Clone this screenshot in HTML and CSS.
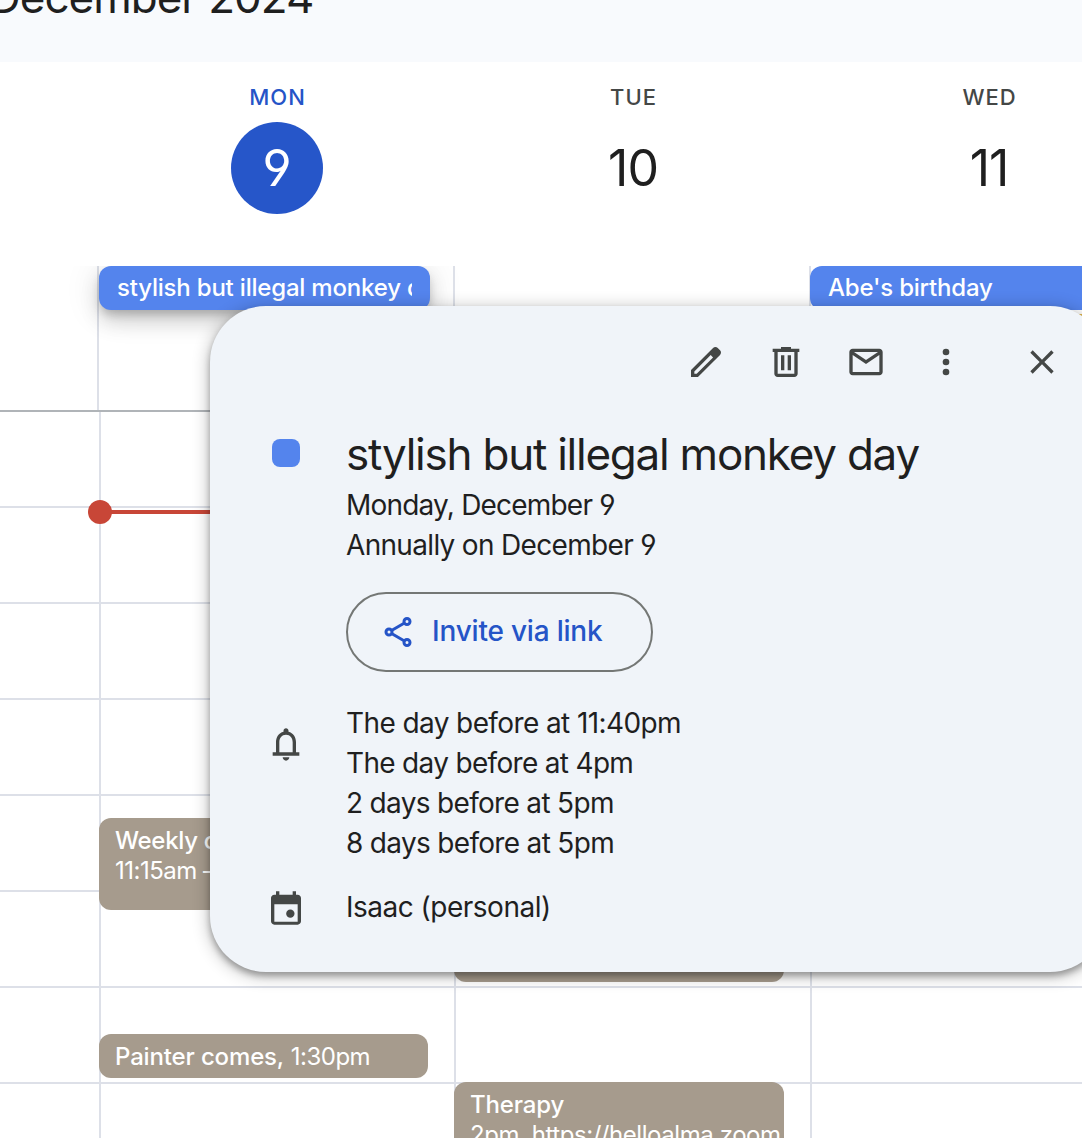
FILE: index.html
```html
<!DOCTYPE html>
<html lang="en">
<head>
<meta charset="utf-8">
<title>Calendar - December 2024</title>
<link rel="stylesheet" href="styles.css">
</head>
<body>
<div class="app">
  <header class="topbar"><h1 class="month">December 2024</h1></header>

  <section class="day-heads">
    <div class="day-head today"><span class="weekday">MON</span><span class="date">9</span></div>
    <div class="day-head"><span class="weekday">TUE</span><span class="date">10</span></div>
    <div class="day-head"><span class="weekday">WED</span><span class="date">11</span></div>
  </section>

  <section class="all-day">
    <div class="all-day-col">
      <div class="chip chip-active"><span class="chip-text">stylish but illegal monkey day</span></div>
    </div>
    <div class="all-day-col"></div>
    <div class="all-day-col">
      <div class="chip chip-wide"><span class="chip-text">Abe's birthday</span></div>
      <div class="chip chip-wide chip-yellow"></div>
    </div>
  </section>

  <main class="time-grid">
    <div class="column gutter"><i></i><i></i><i></i><i></i><i></i><i></i><i></i><i></i></div>
    <div class="column">
      <i></i><i></i><i></i><i></i><i></i><i></i><i></i><i></i>
      <div class="event weekly"><b>Weekly check-in</b><span>11:15am – 12:15pm</span></div>
      <div class="event painter"><p><b>Painter comes,</b> <span>1:30pm</span></p></div>
      <div class="now"></div>
    </div>
    <div class="column">
      <i></i><i></i><i></i><i></i><i></i><i></i><i></i><i></i>
      <div class="event noon"></div>
      <div class="event therapy"><b>Therapy</b><span>2pm, https://helloalma.zoom</span></div>
    </div>
    <div class="column"><i></i><i></i><i></i><i></i><i></i><i></i><i></i><i></i></div>
  </main>

  <aside class="popup">
    <nav class="actions">
      <svg class="icon" viewBox="0 0 24 24"><path d="M20.41 4.94l-1.35-1.35c-.78-.78-2.05-.78-2.83 0L3 16.82V21h4.18L20.41 7.77c.79-.78.79-2.05 0-2.83zM6.41 19.06L5 19v-1.36l9.82-9.82 1.41 1.41-9.82 9.83z"/></svg>
      <svg class="icon" viewBox="0 0 24 24"><path fill-rule="evenodd" d="M15 4V3H9v1H4v2h1v13c0 1.1.9 2 2 2h10c1.1 0 2-.9 2-2V6h1V4h-5zm2 15H7V6h10v13z"/><path d="M9 8h2v9H9zM13 8h2v9h-2z"/></svg>
      <svg class="icon" viewBox="0 0 24 24"><path fill-rule="evenodd" d="M20 4H4c-1.1 0-2 .9-2 2v12c0 1.1.9 2 2 2h16c1.1 0 2-.9 2-2V6c0-1.1-.9-2-2-2zm-.8 2L12 10.8 4.8 6h14.4zM4 18V7.87l8 5.33 8-5.33V18H4z"/></svg>
      <svg class="icon" viewBox="0 0 24 24"><circle cx="12" cy="6" r="2"/><circle cx="12" cy="12" r="2"/><circle cx="12" cy="18" r="2"/></svg>
      <svg class="icon close" viewBox="0 0 24 24"><path d="M19 6.41L17.59 5 12 10.59 6.41 5 5 6.41 10.59 12 5 17.59 6.41 19 12 13.41 17.59 19 19 17.59 13.41 12z"/></svg>
    </nav>

    <div class="row summary">
      <div class="lead"><span class="swatch"></span></div>
      <div class="body">
        <h2 class="title">stylish but illegal monkey day</h2>
        <p class="when">Monday, December 9</p>
        <p>Annually on December 9</p>
        <button class="invite">
          <svg class="share" viewBox="0 0 24 24"><g fill="none" stroke="currentColor" stroke-width="2"><circle cx="18" cy="5" r="2"/><circle cx="6" cy="12" r="2"/><circle cx="18" cy="19" r="2"/><path d="M7.7 11L16.3 6M7.7 13L16.3 18"/></g></svg>
          <span class="invite-label">Invite via link</span>
        </button>
      </div>
    </div>

    <div class="row reminders">
      <div class="lead"><svg class="icon" viewBox="0 0 24 24"><path fill-rule="evenodd" d="M18 17v-6c0-3.07-1.63-5.64-4.5-6.32V4c0-.83-.67-1.5-1.5-1.5s-1.5.67-1.5 1.5v.68C7.64 5.36 6 7.92 6 11v6H4v2h16v-2h-2zm-2 0H8v-6c0-2.48 1.51-4.5 4-4.5s4 2.02 4 4.5v6z"/><path d="M12 22c1.1 0 2-.9 2-2h-4c0 1.1.9 2 2 2z"/></svg></div>
      <div class="body">
        <p class="late">The day before at 11:40pm</p>
        <p>The day before at 4pm</p>
        <p>2 days before at 5pm</p>
        <p>8 days before at 5pm</p>
      </div>
    </div>

    <div class="row owner">
      <div class="lead"><svg class="icon" viewBox="0 0 24 24"><path fill-rule="evenodd" d="M19 4h-1V2h-2v2H8V2H6v2H5c-1.1 0-2 .9-2 2v14c0 1.1.9 2 2 2h14c1.1 0 2-.9 2-2V6c0-1.1-.9-2-2-2zm0 16.3H5V9.7h14v10.6z"/><circle cx="14.6" cy="15.4" r="2.5"/></svg></div>
      <div class="body"><p>Isaac (personal)</p></div>
    </div>
  </aside>
</div>
</body>
</html>
```

FILE: styles.css
```css
* { box-sizing: border-box; }

body {
  margin: 0;
  background: #fff;
  color: #1f1f1f;
  font-family: Inter, Roboto, "Liberation Sans", sans-serif;
  font-feature-settings: "cv04" 1;
  overflow: hidden;
}

h1, h2, p { margin: 0; font-weight: 400; }

.app {
  position: relative;
  width: 1082px;
  height: 1138px;
  overflow: hidden;
  display: flex;
  flex-direction: column;
}

.topbar { flex: none; height: 62px; background: #f8fafd; overflow: hidden; }
.month {
  font-size: 44px;
  line-height: 60px;
  letter-spacing: -1px;
  margin: -33px 0 0 -11px;
  white-space: nowrap;
}

/* Day headings */
.day-heads {
  flex: none;
  height: 204px;
  padding-left: 99px;
  display: grid;
  grid-template-columns: repeat(3, 356px);
}
.day-head { display: flex; flex-direction: column; align-items: center; padding-top: 20px; }
.weekday {
  font-size: 22px;
  line-height: 30px;
  font-weight: 500;
  letter-spacing: 1px;
  margin-right: -1px;
  color: #444746;
}
.date {
  width: 92px;
  height: 92px;
  margin-top: 10px;
  border-radius: 50%;
  font-size: 50px;
  line-height: 92px;
  text-align: center;
  letter-spacing: -1px;
}
.today .weekday { color: #2554c7; }
.today .date { background: #2656c9; color: #fff; letter-spacing: 0; }

/* All-day strip */
.all-day {
  flex: none;
  height: 146px;
  padding-left: 97px;
  display: grid;
  grid-template-columns: 356px 356px 356px;
  border-bottom: 2px solid #b0b4b8;
  overflow: hidden;
}
.all-day-col {
  border-left: 2px solid #dde0e8;
  display: flex;
  flex-direction: column;
  gap: 4px;
}
.chip {
  flex: none;
  width: 331px;
  height: 44px;
  padding: 0 18px;
  border-radius: 12px;
  background: #5484ed;
  color: #fff;
  font-size: 24px;
  font-weight: 500;
  line-height: 43px;
  letter-spacing: -.2px;
}
.chip-text { display: block; overflow: hidden; white-space: nowrap; }
.chip-active {
  box-shadow: 0 6px 10px -2px rgba(0,0,0,.2), 0 12px 20px rgba(0,0,0,.14), 0 2px 36px rgba(0,0,0,.12);
}
.chip-wide { margin-left: -1px; width: 360px; }
.chip-yellow { background: #e5b94e; }

/* Hour grid */
.time-grid {
  flex: 1;
  min-height: 0;
  display: grid;
  grid-template-columns: 99px 355px 356px 272px;
}
.column { position: relative; border-left: 2px solid #dde0e8; }
.gutter { border-left: 0; }
.column i { display: block; height: 96px; border-bottom: 2px solid #dde0e8; }

.event {
  position: absolute;
  left: -2px;
  width: 330px;
  padding: 8px 2px 0 16px;
  border-radius: 12px;
  background: #a69b8d;
  color: #fff;
  font-size: 24px;
  line-height: 30px;
  white-space: nowrap;
  overflow: hidden;
  display: flex;
  flex-direction: column;
}
.event b { font-weight: 500; letter-spacing: -.15px; }
.event span { letter-spacing: -.5px; }
.weekly { top: 406px; height: 92px; }
.weekly b { letter-spacing: -.3px; }
.painter { top: 622px; height: 44px; width: 329px; }
.noon { top: 460px; height: 110px; }
.therapy { top: 670px; height: 92px; }
.therapy span { letter-spacing: -.45px; }
.now {
  position: absolute;
  top: 98px;
  left: 0;
  right: 0;
  height: 4px;
  background: #c84637;
}
.now::before {
  content: "";
  position: absolute;
  left: -13px;
  top: -10px;
  width: 24px;
  height: 24px;
  border-radius: 50%;
  background: #c84637;
}

/* Event details popup */
.popup {
  position: absolute;
  left: 210px;
  top: 306px;
  width: 896px;
  height: 666px;
  border-radius: 56px;
  background: #f0f4f9;
  box-shadow: 0 4px 6px rgba(0,0,0,.3), 0 3px 16px 3px rgba(0,0,0,.2);
}
.actions {
  display: flex;
  gap: 40px;
  height: 76px;
  padding: 36px 0 0 476px;
}
.icon { width: 40px; height: 40px; fill: #444746; display: block; flex: none; }
.close { margin-left: 16px; }

.row { display: flex; padding-left: 56px; }
.lead { width: 40px; margin-right: 40px; flex: none; }
.body { font-size: 28px; line-height: 40px; letter-spacing: -.68px; white-space: nowrap; }
.swatch {
  display: block;
  width: 28px;
  height: 28px;
  margin: 7px 0 0 6px;
  border-radius: 8px;
  background: #5484ed;
}
.summary { margin-top: 50px; }
.title { font-size: 44px; line-height: 44px; letter-spacing: -1.24px; margin-bottom: 9px; }
.when { letter-spacing: -.8px; }
.invite {
  display: flex;
  align-items: center;
  width: 307px;
  height: 80px;
  margin-top: 27px;
  padding: 0 0 0 32px;
  border: 2px solid #747775;
  border-radius: 40px;
  background: none;
  color: #2554c7;
  font: 500 28px/40px Inter, Roboto, "Liberation Sans", sans-serif;
  letter-spacing: -.2px;
  white-space: nowrap;
}
.invite-label { padding-bottom: 2px; }
.share { width: 36px; height: 36px; margin-right: 16px; flex: none; }
.reminders { margin-top: 31px; }
.reminders .icon { margin-top: 21px; }
.late { letter-spacing: -.6px; }
.owner { margin-top: 24px; }
.owner .icon { margin-top: 1px; }
.owner .body { letter-spacing: -.5px; }
```
